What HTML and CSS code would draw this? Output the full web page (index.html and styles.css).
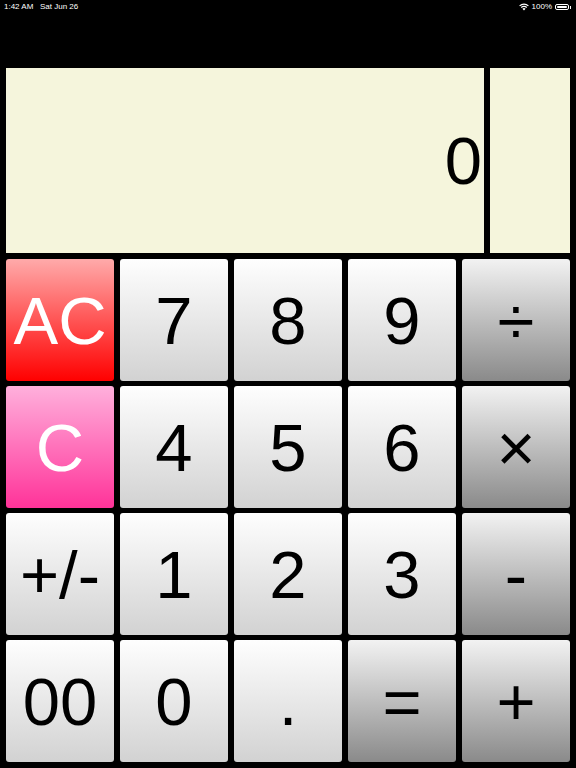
FILE: index.html
```html
<!DOCTYPE html>
<html>
<head>
<meta charset="utf-8">
<link rel="stylesheet" href="styles.css">
</head>
<body>
<div class="status">
  <div class="status-left">1:42 AM&nbsp;&nbsp;&nbsp;Sat Jun 26</div>
  <div class="status-right">
    <svg class="wifi" width="10" height="8" viewBox="0 0 10 8"><path d="M5 7.6 L3.4 5.8 A2.4 2.4 0 0 1 6.6 5.8 Z M2.6 5 A3.6 3.6 0 0 1 7.4 5 L8.2 4.1 A4.8 4.8 0 0 0 1.8 4.1 Z M1 3.3 A6 6 0 0 1 9 3.3 L9.8 2.4 A7.2 7.2 0 0 0 0.2 2.4 Z" fill="#fff"/></svg>
    <span>100%</span>
    <span class="battery"><span class="battery-fill"></span></span><span class="battery-tip"></span>
  </div>
</div>
<div class="calc">
  <div class="display">
    <div class="readout">0</div>
    <div class="memory"></div>
  </div>
  <div class="keys">
    <div class="key red">AC</div>
    <div class="key num">7</div>
    <div class="key num">8</div>
    <div class="key num">9</div>
    <div class="key op">÷</div>
    <div class="key pink">C</div>
    <div class="key num">4</div>
    <div class="key num">5</div>
    <div class="key num">6</div>
    <div class="key op">×</div>
    <div class="key num">+/-</div>
    <div class="key num">1</div>
    <div class="key num">2</div>
    <div class="key num">3</div>
    <div class="key op">-</div>
    <div class="key num">00</div>
    <div class="key num">0</div>
    <div class="key num">.</div>
    <div class="key op">=</div>
    <div class="key op">+</div>
  </div>
</div>
</body>
</html>
```
FILE: styles.css
```css
html, body {
  margin: 0;
  padding: 0;
  background: #000;
  width: 576px;
  height: 768px;
  overflow: hidden;
  font-family: "Liberation Sans", Arial, sans-serif;
}
.status {
  height: 20px;
  display: flex;
  justify-content: space-between;
  align-items: flex-start;
  padding: 2px 5px 0 4px;
  box-sizing: border-box;
  color: #fff;
  font-size: 8px;
  line-height: 10px;
}
.status-right {
  display: flex;
  align-items: center;
  gap: 3px;
}
.wifi { display: block; }
.battery {
  width: 14px;
  height: 6px;
  border: 1px solid #fff;
  border-radius: 2px;
  padding: 1px;
  box-sizing: border-box;
  display: flex;
}
.battery-fill {
  flex: 1;
  background: #fff;
  border-radius: 1px;
}
.battery-tip {
  width: 1px;
  height: 3px;
  background: #fff;
  margin-left: -2px;
}
.calc {
  padding: 48px 6px 6px;
  display: flex;
  flex-direction: column;
  gap: 6px;
}
.display {
  height: 185px;
  display: grid;
  grid-template-columns: 478px 80px;
  gap: 6px;
}
.readout, .memory {
  background: #f5f5dc;
}
.readout {
  display: flex;
  align-items: center;
  justify-content: flex-end;
  padding-right: 2px;
  font-size: 67px;
  color: #000;
}
.keys {
  display: grid;
  grid-template-columns: repeat(5, 108px);
  grid-template-rows: repeat(4, 122px);
  column-gap: 6px;
  row-gap: 5px;
}
.key {
  border-radius: 3px;
  display: flex;
  align-items: center;
  justify-content: center;
  font-size: 67px;
  color: #000;
}
.num {
  background: linear-gradient(to bottom, #fefefe, #d2d2d2);
}
.op {
  background: linear-gradient(to bottom, #f2f2f2, #8a8a8a);
}
.red {
  background: linear-gradient(to bottom, #ffaaaa, #ff0000);
  color: #fff;
}
.pink {
  background: linear-gradient(to bottom, #ffb0dc, #ff3399);
  color: #fff;
}
```
